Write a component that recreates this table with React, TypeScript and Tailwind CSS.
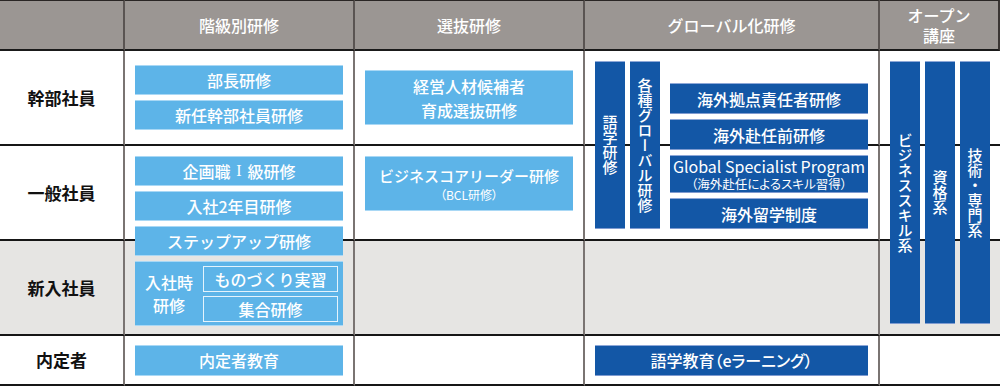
import type { ReactNode } from "react";

const rowStart = ["row-start-1", "row-start-2", "row-start-3", "row-start-4", "row-start-5"];
const colStart = ["col-start-1", "col-start-2", "col-start-3", "col-start-4", "col-start-5"];

const headers = ["", "階級別研修", "選抜研修", "グローバル化研修", "オープン\n講座"];
const labels = ["幹部社員", "一般社員", "新入社員", "内定者"];

function LightBox({ children, className = "" }: { children: ReactNode; className?: string }) {
  return (
    <div
      className={`flex items-center justify-center border-y border-[#a9d8f5] bg-[#5db4e8] text-center font-medium text-white ${className}`}
    >
      {children}
    </div>
  );
}

function DarkBox({ children, className = "" }: { children: ReactNode; className?: string }) {
  return (
    <div
      className={`flex items-center justify-center border-t border-b border-t-[#8ea8d8] border-b-[#7f9bd0] bg-[#1357a6] text-center font-medium text-white ${className}`}
    >
      {children}
    </div>
  );
}

function Vertical({ text, className = "" }: { text: string; className?: string }) {
  return (
    <DarkBox className={`w-[30px] ${className}`}>
      <span className="text-[15px] leading-[15px] [writing-mode:vertical-rl]">{text}</span>
    </DarkBox>
  );
}

export default function App() {
  return (
    <div className="h-[386px] w-[1000px] bg-white font-['Noto_Sans_CJK_JP','Noto_Sans',sans-serif]">
      <div className="grid grid-cols-[125px_230px_230px_295px_120px] grid-rows-[51px_95px_95px_95px_50px]">
        {/* header */}
        {headers.map((h, c) => (
          <div
            key={`h-${c}`}
            className={`${rowStart[0]} ${colStart[c]} flex items-center justify-center whitespace-pre-line border-t border-b-2 border-t-[#2a2625] border-b-[#1a1a1a] bg-[#9b9693] text-center text-[16px] font-medium leading-[20px] text-white ${
              c < 4 ? "border-r-2 border-r-[#5a5452]" : "border-r-2 border-r-[#3a3533]"
            }`}
          >
            {h}
          </div>
        ))}

        {/* body cells */}
        {labels.map((label, r) =>
          [0, 1, 2, 3, 4].map((c) => (
            <div
              key={`c-${r}-${c}`}
              className={`${rowStart[r + 1]} ${colStart[c]} flex items-center justify-center border-b-2 border-b-[#161616] ${
                c < 4 ? "border-r-2 border-r-[#7a7472]" : ""
              } ${r === 2 ? "bg-[#e6e5e3]" : "bg-white"} text-[17px] font-bold text-[#111]`}
            >
              {c === 0 ? label : null}
            </div>
          ))
        )}

        {/* 階級別研修 */}
        <div className="relative z-10 col-start-2 row-start-2 flex flex-col justify-center gap-[5px] pl-[10px] pr-[12px] pb-[2px]">
          <LightBox className="h-[30px] text-[16px]">部長研修</LightBox>
          <LightBox className="h-[30px] text-[16px]">新任幹部社員研修</LightBox>
        </div>
        <div className="relative z-10 col-start-2 row-start-3 row-span-2 flex flex-col gap-[5px] pl-[10px] pr-[12px] pt-[10px]">
          <LightBox className="h-[30px] text-[16px]">
            企画職
            <span className="inline-block w-[17px] text-center font-['Liberation_Serif',serif] font-normal">I</span>
            級研修
          </LightBox>
          <LightBox className="h-[30px] text-[16px]">入社2年目研修</LightBox>
          <LightBox className="h-[30px] text-[16px]">ステップアップ研修</LightBox>
          <div className="flex h-[65px] items-center border-y border-[#a9d8f5] bg-[#5db4e8] pl-[10px] pr-[5px] font-medium text-white">
            <div className="w-[48px] text-center text-[16px] leading-[23px]">
              入社時
              <br />
              研修
            </div>
            <div className="ml-[10px] flex flex-1 flex-col gap-[4px]">
              <div className="flex h-[26px] items-center justify-center border-[1.5px] border-[#e4f3fc] text-[16px]">
                ものづくり実習
              </div>
              <div className="flex h-[26px] items-center justify-center border-[1.5px] border-[#e4f3fc] text-[16px]">
                集合研修
              </div>
            </div>
          </div>
        </div>
        <div className="relative z-10 col-start-2 row-start-5 flex flex-col justify-center pl-[10px] pr-[12px] pb-[2px]">
          <LightBox className="h-[31px] text-[16px]">内定者教育</LightBox>
        </div>

        {/* 選抜研修 */}
        <div className="relative z-10 col-start-3 row-start-2 flex flex-col justify-center pl-[10px] pr-[12px] pb-[2px]">
          <LightBox className="h-[55px] text-[16px] leading-[24px]">
            経営人材候補者
            <br />
            育成選抜研修
          </LightBox>
        </div>
        <div className="relative z-10 col-start-3 row-start-3 flex flex-col pl-[10px] pr-[12px] pt-[10px]">
          <LightBox className="h-[55px] flex-col">
            <span className="text-[15px] leading-[22px]">ビジネスコアリーダー研修</span>
            <span className="text-[12px] font-normal leading-[16px] [font-feature-settings:'palt']">（BCL研修）</span>
          </LightBox>
        </div>

        {/* グローバル化研修 */}
        <div className="relative z-10 col-start-4 row-start-2 row-span-2 flex gap-[5px] pl-[10px] pr-[12px] pt-[10px] pb-[12px]">
          <Vertical text="語学研修" />
          <Vertical text="各種グローバル研修" />
          <div className="ml-[5px] flex flex-1 flex-col justify-end gap-[5px]">
            <DarkBox className="h-[31px] text-[16px]">海外拠点責任者研修</DarkBox>
            <DarkBox className="h-[31px] text-[16px]">海外赴任前研修</DarkBox>
            <DarkBox className="h-[38px] flex-col font-normal">
              <div className="text-[16px] leading-[19px]">Global Specialist Program</div>
              <div className="text-[12.5px] leading-[15px] [font-feature-settings:'palt']">（海外赴任によるスキル習得）</div>
            </DarkBox>
            <DarkBox className="h-[31px] text-[16px]">海外留学制度</DarkBox>
          </div>
        </div>
        <div className="relative z-10 col-start-4 row-start-5 flex flex-col justify-center pl-[10px] pr-[12px] pb-[2px]">
          <DarkBox className="h-[31px] text-[16px] [font-feature-settings:'palt']">語学教育（eラーニング）</DarkBox>
        </div>

        {/* オープン講座 */}
        <div className="relative z-10 col-start-5 row-start-2 row-span-3 flex gap-[5px] pl-[10px] pt-[10px] pb-[12px]">
          <Vertical text="ビジネススキル系" />
          <Vertical text="資格系" />
          <Vertical text="技術・専門系" />
        </div>
      </div>
    </div>
  );
}
